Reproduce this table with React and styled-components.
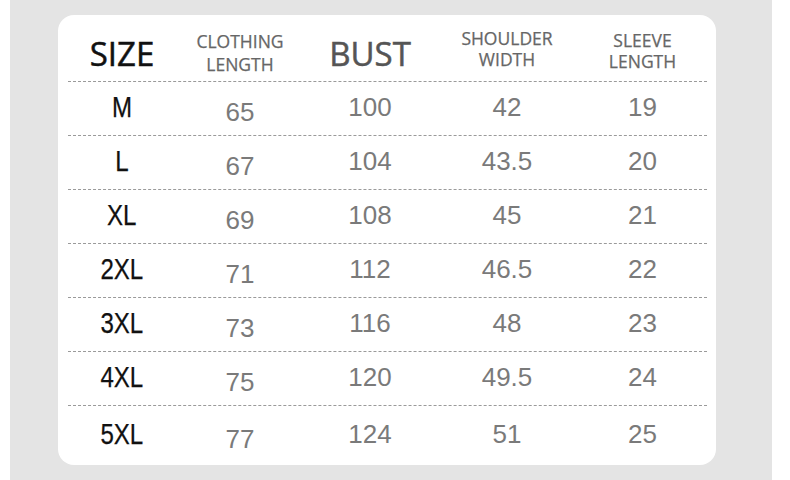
import React from 'react'
import styled, { createGlobalStyle } from 'styled-components'

const GlobalStyle = createGlobalStyle`
  html, body {
    margin: 0;
    padding: 0;
    background: #ffffff;
  }
`

const columns = [
  { key: 'size', label: 'SIZE', big: true, dark: true, shift: 10 },
  { key: 'length', label: ['CLOTHING', 'LENGTH'], shift: 10, gap: 23 },
  { key: 'bust', label: 'BUST', big: true, shift: 10 },
  { key: 'shoulder', label: ['SHOULDER', 'WIDTH'], shift: 2, gap: 21 },
  { key: 'sleeve', label: ['SLEEVE', 'LENGTH'], shift: 6, gap: 21 },
]

const rows = [
  ['M', '65', '100', '42', '19'],
  ['L', '67', '104', '43.5', '20'],
  ['XL', '69', '108', '45', '21'],
  ['2XL', '71', '112', '46.5', '22'],
  ['3XL', '73', '116', '48', '23'],
  ['4XL', '75', '120', '49.5', '24'],
  ['5XL', '77', '124', '51', '25'],
]

const App = () => {
  return (
    <Page>
      <GlobalStyle />
      <Card>
        <HeaderRow>
          {columns.map((col) => (
            <HeaderCell key={col.key} shift={col.shift}>
              {col.big ? (
                <BigLabel dark={col.dark}>{col.label}</BigLabel>
              ) : (
                <SmallLabel gap={col.gap}>
                  {col.label[0]}
                  <br />
                  {col.label[1]}
                </SmallLabel>
              )}
            </HeaderCell>
          ))}
        </HeaderRow>

        {rows.map((row, i) => (
          <Row key={row[0]} last={i === rows.length - 1}>
            <SizeCell>{row[0]}</SizeCell>
            {row.slice(1).map((value, j) => (
              <ValueCell key={j} drop={j === 0}>
                {value}
              </ValueCell>
            ))}
          </Row>
        ))}
      </Card>
    </Page>
  )
}

const Page = styled.div`
  box-sizing: border-box;
  width: 762px;
  height: 480px;
  margin-left: 10px;
  padding: 15px 0 0 48px;
  background: #e4e4e4;
`

const Card = styled.div`
  box-sizing: border-box;
  width: 658px;
  height: 450px;
  padding: 0 9px 0 10px;
  background: #ffffff;
  border-radius: 16px;
`

const grid = `
  display: grid;
  grid-template-columns: 108px 128px 132px 142px 1fr;
  align-items: center;
  justify-items: center;
`

const HeaderRow = styled.div`
  ${grid}
  height: 66px;
  border-bottom: 1px dashed #9a9a9a;
`

const HeaderCell = styled.div`
  text-align: center;
  padding-top: ${({ shift }) => shift}px;
`

const BigLabel = styled.div`
  font-family: 'Open Sans', sans-serif;
  font-size: 33px;
  line-height: 1;
  color: ${({ dark }) => (dark ? '#111111' : '#555555')};
  -webkit-text-stroke: 0.5px ${({ dark }) => (dark ? '#111111' : '#555555')};
`

const SmallLabel = styled.div`
  font-family: 'Open Sans', sans-serif;
  font-size: 17.5px;
  line-height: ${({ gap }) => gap}px;
  color: #666666;
  -webkit-text-stroke: 0.25px #666666;
`

const Row = styled.div`
  ${grid}
  height: ${({ last }) => (last ? '58px' : '53px')};
  border-bottom: ${({ last }) => (last ? 'none' : '1px dashed #9a9a9a')};
  padding-bottom: ${({ last }) => (last ? '4px' : '0')};
`

const SizeCell = styled.div`
  font-family: 'Liberation Sans', Arial, sans-serif;
  font-size: 29px;
  color: #111111;
  -webkit-text-stroke: 0.25px #111111;
  transform: scaleX(0.83);
  margin-bottom: 2px;
`

const ValueCell = styled.div`
  font-family: 'Liberation Sans', Arial, sans-serif;
  font-size: 26px;
  color: #7a7a7a;
  padding-top: ${({ drop }) => (drop ? '10px' : '0')};
  margin-bottom: 2px;
`

export default App
